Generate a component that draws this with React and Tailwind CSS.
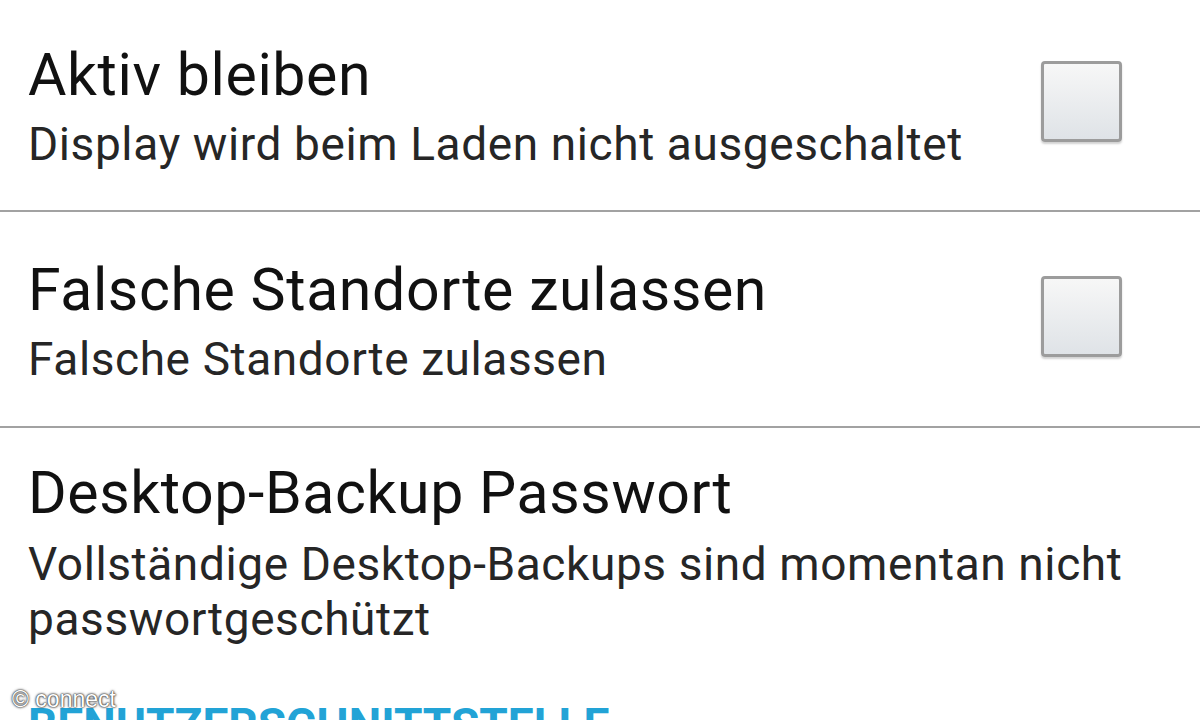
const ROWS = [
  {
    title: 'Aktiv bleiben',
    summary: ['Display wird beim Laden nicht ausgeschaltet'],
    checkbox: true,
    pad: 'pt-[43px] pb-[38px]',
    gap: 'mt-[10px]',
  },
  {
    title: 'Falsche Standorte zulassen',
    summary: ['Falsche Standorte zulassen'],
    checkbox: true,
    pad: 'pt-[46px] pb-[39px]',
    gap: 'mt-[10px]',
  },
  {
    title: 'Desktop-Backup Passwort',
    summary: ['Vollständige Desktop-Backups sind momentan nicht', 'passwortgeschützt'],
    checkbox: false,
    pad: 'pt-[33px]',
    gap: 'mt-[12px]',
  },
]

function Checkbox() {
  return (
    <div className="mb-[12px] h-[81px] w-[81px] shrink-0 rounded-[4px] border-[3px] border-[#9c9c9c] bg-gradient-to-b from-[#f7f7f7] to-[#dfe3e7] shadow-[0_2px_2px_rgba(0,0,0,0.18)]" />
  )
}

function PrefRow({ row }) {
  return (
    <div className={`flex items-center pl-[28px] pr-[78px] ${row.pad}`}>
      <div className="min-w-0 flex-1">
        <div className="whitespace-nowrap text-[59px] leading-[64px] tracking-[0.6px] text-[#111111]">{row.title}</div>
        <div className={`${row.gap} text-[46px] leading-[55px] tracking-[0.6px] text-[#262626]`}>
          {row.summary.map((line) => (
            <div key={line} className="whitespace-nowrap">{line}</div>
          ))}
        </div>
      </div>
      {row.checkbox && <Checkbox />}
    </div>
  )
}

export default function App() {
  return (
    <div className="relative h-[720px] w-[1200px] overflow-hidden bg-white font-['Roboto','Noto_Sans',sans-serif]">
      {ROWS.map((row, i) => (
        <div key={row.title}>
          <PrefRow row={row} />
          {i < ROWS.length - 1 && <div className="h-[2px] bg-[#a2a2a2]" />}
        </div>
      ))}

      {/* Section header, cut off at the bottom */}
      <div className="mt-[52px] pl-[28px] text-[46px] font-bold leading-[52px] text-[#22a3d6]">
        BENUTZERSCHNITTSTELLE
      </div>

      {/* Watermark */}
      <div className="absolute left-[12px] top-[687px] font-['Liberation_Sans',Arial,sans-serif] text-[23px] leading-[24px] text-white [text-shadow:0_0_1px_#333,0_0_2px_#333,0_0_3px_#555]">
        © connect
      </div>
    </div>
  )
}
